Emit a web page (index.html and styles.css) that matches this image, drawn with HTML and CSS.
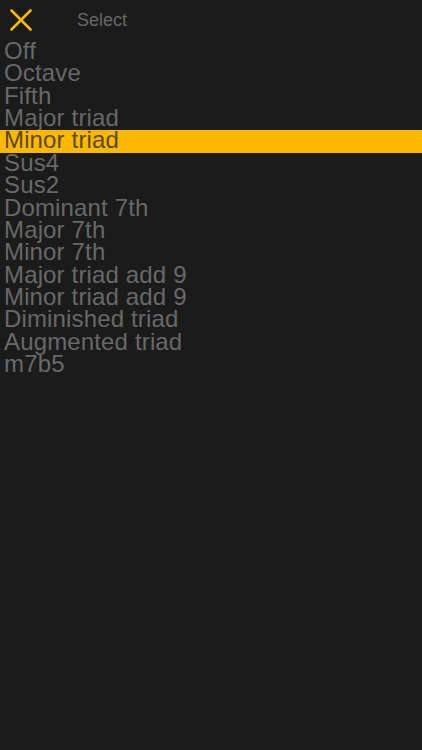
FILE: index.html
```html
<!DOCTYPE html>
<html>
<head>
<meta charset="utf-8">
<link rel="stylesheet" href="styles.css">
</head>
<body>
<div class="screen">
  <header class="topbar">
    <svg class="close" width="22" height="22" viewBox="0 0 22 22">
      <path d="M1.5 1.5 L20.5 20.5 M20.5 1.5 L1.5 20.5" stroke="#f8b700" stroke-width="2.6" stroke-linecap="round" fill="none"/>
    </svg>
    <span class="title">Select</span>
  </header>
  <ul class="list">
    <li>Off</li>
    <li>Octave</li>
    <li>Fifth</li>
    <li>Major triad</li>
    <li class="selected">Minor triad</li>
    <li>Sus4</li>
    <li>Sus2</li>
    <li>Dominant 7th</li>
    <li>Major 7th</li>
    <li>Minor 7th</li>
    <li>Major triad add 9</li>
    <li>Minor triad add 9</li>
    <li>Diminished triad</li>
    <li>Augmented triad</li>
    <li>m7b5</li>
  </ul>
</div>
</body>
</html>
```
FILE: styles.css
```css
html, body {
  margin: 0;
  padding: 0;
  background: #1b1b1b;
}
.screen {
  width: 422px;
  height: 750px;
  background: #1b1b1b;
  font-family: "Liberation Sans", Arial, sans-serif;
  overflow: hidden;
}
.topbar {
  display: flex;
  align-items: center;
  height: 40px;
  padding-left: 10px;
  box-sizing: border-box;
  padding-bottom: 1px;
}
.close {
  display: block;
  flex: none;
}
.title {
  margin-left: 45px;
  font-size: 18px;
  color: #676767;
  line-height: 20px;
}
.list {
  list-style: none;
  margin: 0;
  padding: 0 0 0 4px;
}
.list li {
  font-size: 24px;
  line-height: 22.36px;
  letter-spacing: 0.15px;
  color: #686868;
  position: relative;
  white-space: nowrap;
}
.list li.selected {
  color: #5c4914;
  z-index: 0;
}
.list li.selected::before {
  content: "";
  position: absolute;
  left: -4px;
  right: 0;
  top: 1px;
  height: 23px;
  background: #fdb900;
  z-index: -1;
}
```
